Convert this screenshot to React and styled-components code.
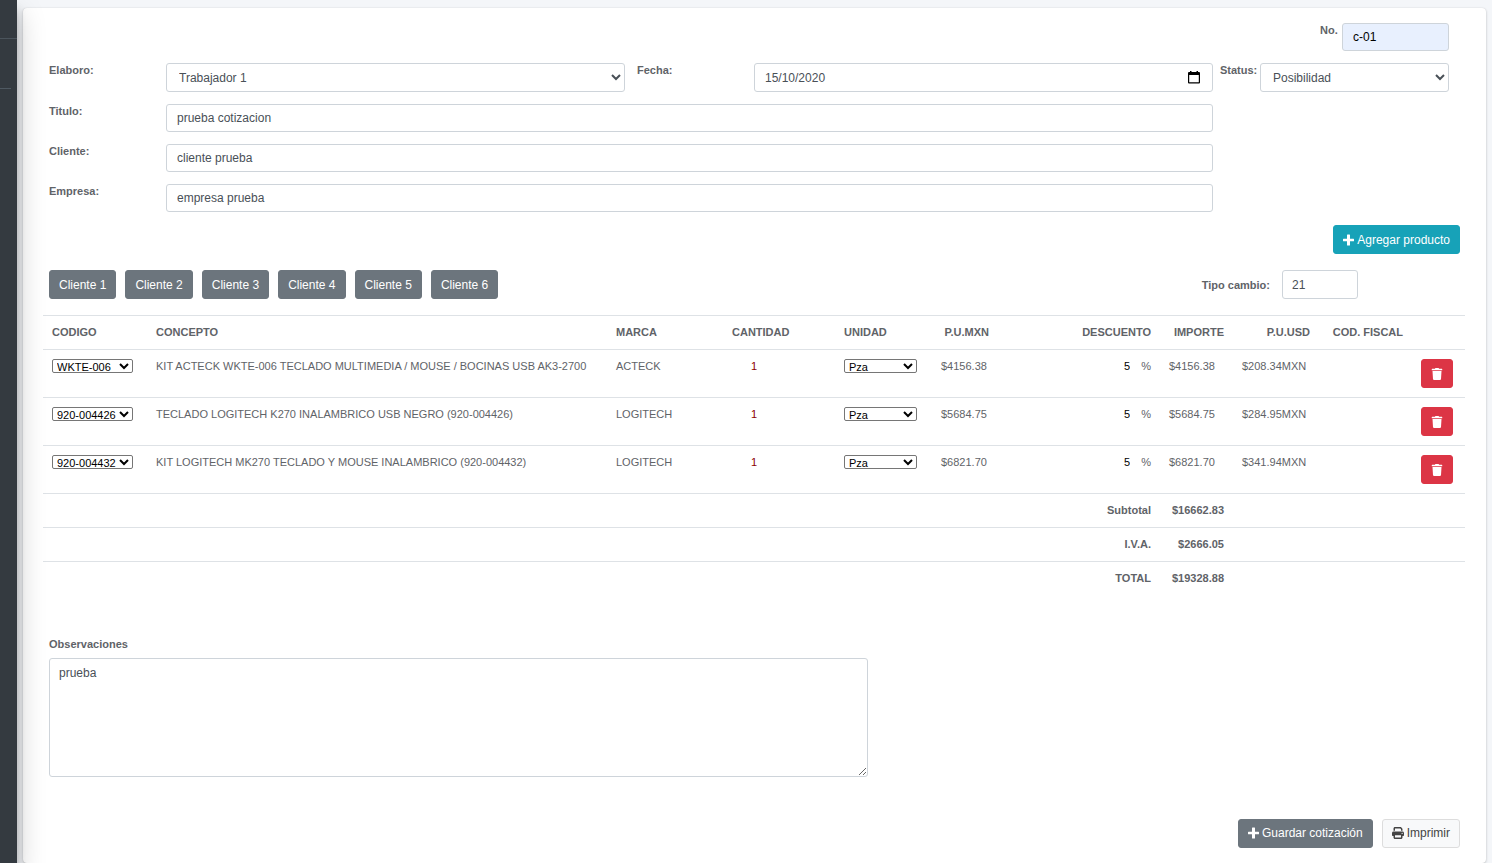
import { useState } from "react";
import styled, { createGlobalStyle } from "styled-components";
import { FaTrash } from "react-icons/fa";
import { FaPrint } from "react-icons/fa6";

const clientes = [1, 2, 3, 4, 5, 6];

const productos = [
    { codigo: "WKTE-006", concepto: "KIT ACTECK WKTE-006 TECLADO MULTIMEDIA / MOUSE / BOCINAS USB AK3-2700", marca: "ACTECK", mxn: "$4156.38", importe: "$4156.38", usd: "$208.34MXN" },
    { codigo: "920-004426", concepto: "TECLADO LOGITECH K270 INALAMBRICO USB NEGRO (920-004426)", marca: "LOGITECH", mxn: "$5684.75", importe: "$5684.75", usd: "$284.95MXN" },
    { codigo: "920-004432", concepto: "KIT LOGITECH MK270 TECLADO Y MOUSE INALAMBRICO (920-004432)", marca: "LOGITECH", mxn: "$6821.70", importe: "$6821.70", usd: "$341.94MXN" },
];

const totales = [
    { label: "Subtotal", value: "$16662.83" },
    { label: "I.V.A.", value: "$2666.05" },
    { label: "TOTAL", value: "$19328.88" },
];

function PlusIcon() {
    return (
        <svg viewBox="0 0 11 12" fill="currentColor">
            <path d="M4.500 .5h2a.5.5 0 0 1 .5.5v3.700h3.500a.5.5 0 0 1 .5.5v1.600a.5.5 0 0 1-.5.5H7V11a.5.5 0 0 1-.5.5h-2A.5.5 0 0 1 4 11V7.300H.5a.5.5 0 0 1-.5-.5V5.200a.5.5 0 0 1 .5-.5H4V1a.5.5 0 0 1 .5-.5z" />
        </svg>
    )
}

function CalendarIcon() {
    return (
        <svg width="12" height="13" viewBox="0 0 12 13">
            <path fill="#000" fillRule="evenodd" d="M2 0h1.500v1h5V0H10v1h1a1 1 0 0 1 1 1v9.500a1 1 0 0 1-1 1H1a1 1 0 0 1-1-1V2a1 1 0 0 1 1-1h1zM1.200 4v7.300h9.600V4z" />
        </svg>
    )
}

function Field({ id, label, value }) {
    return (
        <>
            <RowLabel htmlFor={id}>{label}</RowLabel>
            <WideInput id={id} defaultValue={value} />
        </>
    )
}

function ProductRow({ item }) {
    return (
        <tr>
            <Td>
                <SmallSelect aria-label="Codigo" $width={81} defaultValue={item.codigo}>
                    {productos.map((p) => <option key={p.codigo}>{p.codigo}</option>)}
                </SmallSelect>
            </Td>
            <Td>{item.concepto}</Td>
            <Td>{item.marca}</Td>
            <Td><Cantidad aria-label="Cantidad" defaultValue="1" /></Td>
            <Td>
                <SmallSelect aria-label="Unidad" $width={73}>
                    <option>Pza</option>
                </SmallSelect>
            </Td>
            <Td>{item.mxn}</Td>
            <Td $align="right">
                <Descuento aria-label="Descuento" defaultValue="5" />%
            </Td>
            <Td>{item.importe}</Td>
            <Td>{item.usd}</Td>
            <Td />
            <Td>
                <Button $variant="danger" type="button" aria-label="Eliminar">
                    <FaTrash />
                </Button>
            </Td>
        </tr>
    )
}

function App() {
    const [fecha, setFecha] = useState("15/10/2020");

    return (
        <>
            <GlobalStyle />
            <Layout>
                <Sidebar>
                    <Brand />
                    <UserPanel />
                </Sidebar>
                <Content>
                    <Card>
                        <NumberRow>
                            <Label htmlFor="numero">No.</Label>
                            <Input id="numero" defaultValue="c-01" $filled />
                        </NumberRow>
                        <FormGrid>
                            <RowLabel htmlFor="elaboro">Elaboro:</RowLabel>
                            <Select id="elaboro">
                                <option>Trabajador 1</option>
                            </Select>
                            <Label htmlFor="fecha" $indent={12}>Fecha:</Label>
                            <DateBox>
                                <DateInput id="fecha" value={fecha} onChange={(e) => setFecha(e.target.value)} />
                                <DateButton type="button" aria-label="Abrir calendario">
                                    <CalendarIcon />
                                </DateButton>
                            </DateBox>
                            <Label htmlFor="status" $indent={7}>Status:</Label>
                            <Select id="status">
                                <option>Posibilidad</option>
                            </Select>
                            <Field id="titulo" label="Titulo:" value="prueba cotizacion" />
                            <Field id="cliente" label="Cliente:" value="cliente prueba" />
                            <Field id="empresa" label="Empresa:" value="empresa prueba" />
                        </FormGrid>
                        <Actions>
                            <Button $variant="info" type="button"><PlusIcon />Agregar producto</Button>
                        </Actions>
                        <Toolbar>
                            <ClientList>
                                {clientes.map((n) => (
                                    <Button key={n} $variant="secondary" type="button">Cliente {n}</Button>
                                ))}
                            </ClientList>
                            <Exchange>
                                <ExchangeLabel htmlFor="cambio">Tipo cambio:</ExchangeLabel>
                                <ExchangeInput id="cambio" defaultValue="21" />
                            </Exchange>
                        </Toolbar>
                        <Table>
                            <colgroup>
                                <Col $width={104} />
                                <col />
                                <Col $width={116} />
                                <Col $width={112} />
                                <Col $width={97} />
                                <Col $width={66} />
                                <Col $width={162} />
                                <Col $width={73} />
                                <Col $width={86} />
                                <Col $width={93} />
                                <Col $width={53} />
                            </colgroup>
                            <thead>
                                <tr>
                                    <Th>CODIGO</Th>
                                    <Th>CONCEPTO</Th>
                                    <Th>MARCA</Th>
                                    <Th>CANTIDAD</Th>
                                    <Th>UNIDAD</Th>
                                    <Th $align="right">P.U.MXN</Th>
                                    <Th $align="right">DESCUENTO</Th>
                                    <Th $align="right">IMPORTE</Th>
                                    <Th $align="right">P.U.USD</Th>
                                    <Th $align="right">COD. FISCAL</Th>
                                    <Th as="td" />
                                </tr>
                            </thead>
                            <tbody>
                                {productos.map((item) => <ProductRow key={item.codigo} item={item} />)}
                                {totales.map((t) => (
                                    <tr key={t.label}>
                                        <Th as="td" colSpan={6} />
                                        <Th $align="right">{t.label}</Th>
                                        <Th as="td" $align="right">{t.value}</Th>
                                        <Th as="td" colSpan={3} />
                                    </tr>
                                ))}
                            </tbody>
                        </Table>
                        <Notes>
                            <Label htmlFor="observaciones">Observaciones</Label>
                            <TextArea id="observaciones" defaultValue="prueba" />
                        </Notes>
                        <Actions>
                            <Button $variant="secondary" type="button"><PlusIcon />Guardar cotización</Button>
                            <Button $variant="light" type="button"><FaPrint />Imprimir</Button>
                        </Actions>
                    </Card>
                </Content>
            </Layout>
        </>
    )
};

const GlobalStyle = createGlobalStyle`
    * {
        box-sizing:border-box;
    }
    body {
        margin:0;
        background:#f4f6f9;
        color:#5f6368;
        font-family:"Liberation Sans", Arial, sans-serif;
        font-size:11px;
    }
    input, select, textarea, button {
        margin:0;
        font-family:inherit;
    }
`
const Layout = styled.div`
    display:flex;
    min-height:100vh;
    overflow:hidden;
`
const Sidebar = styled.aside`
    position:relative;
    z-index:1;
    flex:0 0 17px;
    background:#343a40;
    box-shadow:0 14px 28px rgba(0,0,0,.25), 0 10px 10px rgba(0,0,0,.22);
`
const Brand = styled.div`
    height:39px;
    border-bottom:1px solid #4b545c;
`
const UserPanel = styled.div`
    height:50px;
    margin-right:6px;
    border-bottom:1px solid #4f5962;
`
const Content = styled.main`
    flex:1;
    min-width:0;
    padding:8px 6px 0;
`
const Card = styled.form`
    padding:15px 21px 15px 20px;
    background:#fff;
    border-radius:4px;
    box-shadow:0 0 1px rgba(0,0,0,.13), 0 1px 3px rgba(0,0,0,.2);
`
const Label = styled.label`
    padding-left:${(p) => p.$indent || 0}px;
    font-size:11px;
    line-height:14px;
    font-weight:700;
`
const RowLabel = styled(Label)`
    grid-column:1;
`
const Input = styled.input`
    width:100%;
    height:28px;
    padding:0 10px;
    border:1px solid #ced4da;
    border-radius:3px;
    background:${(p) => (p.$filled ? "#e8f0fe" : "#fff")};
    color:${(p) => (p.$filled ? "#000" : "#495057")};
    font-size:12px;
`
const WideInput = styled(Input)`
    grid-column:2 / span 3;
`
const Select = styled.select`
    width:100%;
    height:29px;
    padding:0 8px;
    border:1px solid #ced4da;
    border-radius:3px;
    background:#fff;
    color:#495057;
    font-size:12px;
`
const NumberRow = styled.div`
    display:grid;
    grid-template-columns:22px 107px;
    justify-content:end;
    padding-right:16px;
    margin-bottom:12px;
`
const FormGrid = styled.div`
    display:grid;
    grid-template-columns:117px 1fr 129px 1fr 47px 189px;
    row-gap:12px;
    padding:0 16px 0 6px;
    margin-bottom:13px;
`
const DateBox = styled.div`
    position:relative;
`
const DateInput = styled(Input)`
    height:29px;
`
const DateButton = styled.button`
    position:absolute;
    top:0;
    right:13px;
    display:flex;
    align-items:center;
    height:100%;
    padding:0;
    border:0;
    background:none;
`
const variants = {
    info: { bg: "#17a2b8", border: "#17a2b8", color: "#fff" },
    secondary: { bg: "#6c757d", border: "#6c757d", color: "#fff" },
    danger: { bg: "#dc3545", border: "#dc3545", color: "#fff" },
    light: { bg: "#f8f9fa", border: "#dddddd", color: "#444444" },
}
const Button = styled.button`
    display:inline-flex;
    align-items:center;
    gap:3px;
    height:29px;
    padding:0 9px;
    border:1px solid ${(p) => variants[p.$variant].border};
    border-radius:3px;
    background:${(p) => variants[p.$variant].bg};
    color:${(p) => variants[p.$variant].color};
    font-size:12px;
    white-space:nowrap;

    svg {
        width:auto;
        height:12px;
    }
`
const Actions = styled.div`
    display:flex;
    justify-content:flex-end;
    gap:9px;
    padding-right:5px;
`
const Toolbar = styled.div`
    display:flex;
    justify-content:space-between;
    padding:0 107px 0 6px;
    margin:16px 0;
`
const ClientList = styled.div`
    display:flex;
    gap:9px;
`
const Exchange = styled.div`
    display:flex;
    align-items:center;
    gap:12px;
`
const ExchangeLabel = styled(Label)`
    white-space:nowrap;
`
const ExchangeInput = styled(Input)`
    width:76px;
    height:29px;
    padding:0 9px;
`
const Table = styled.table`
    width:100%;
    table-layout:fixed;
    border-collapse:collapse;
`
const Col = styled.col`
    width:${(p) => p.$width}px;
`
const Td = styled.td`
    height:48px;
    padding:9px 9px 0;
    border-top:1px solid #dee2e6;
    line-height:15px;
    text-align:${(p) => p.$align || "left"};
    vertical-align:top;
    white-space:nowrap;
`
const Th = styled.th`
    height:34px;
    padding:9px;
    border-top:1px solid #dee2e6;
    font-weight:700;
    line-height:15px;
    text-align:${(p) => p.$align || "left"};
    white-space:nowrap;
`
const SmallSelect = styled.select`
    display:block;
    width:${(p) => p.$width}px;
    height:14px;
    padding:0;
    border:1px solid #767676;
    border-radius:2px;
    background:#fff;
    color:#000;
    font-size:11px;
`
const Cantidad = styled.input`
    display:block;
    width:44px;
    height:14px;
    padding:0;
    border:0;
    background:none;
    color:#8b0000;
    font-size:11px;
    text-align:center;
`
const Descuento = styled.input`
    width:30px;
    height:15px;
    padding:0;
    margin-right:11px;
    border:0;
    background:none;
    color:#000;
    font-size:11px;
    line-height:15px;
    text-align:right;
`
const Notes = styled.div`
    display:flex;
    flex-direction:column;
    width:58%;
    gap:7px;
    padding-left:6px;
    margin:41px 0 42px;
`
const TextArea = styled.textarea`
    width:100%;
    height:119px;
    padding:5px 9px;
    border:1px solid #ced4da;
    border-radius:3px;
    color:#495057;
    font-size:12px;
    line-height:18px;
`

export default App;
